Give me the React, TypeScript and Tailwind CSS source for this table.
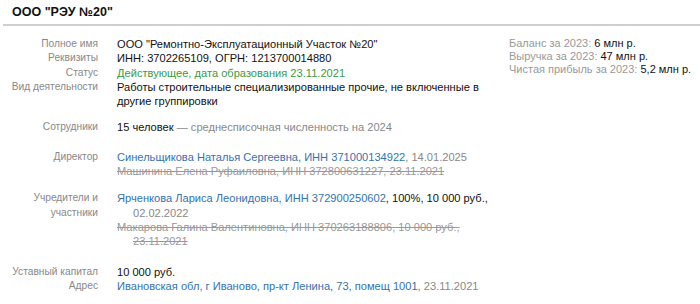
import React from 'react';

const Row: React.FC<{ label: React.ReactNode; children: React.ReactNode; className?: string }> = ({ label, children, className = '' }) => (
  <div className={`flex ${className}`}>
    <div className="w-[98px] shrink-0 text-right text-[10.2px] leading-[14.3px] text-[#888]">{label}</div>
    <div className="w-[397px] shrink-0 pl-[19px] text-[11.1px] leading-[14.3px] text-[#111]">{children}</div>
  </div>
);

const Link: React.FC<{ children: React.ReactNode }> = ({ children }) => (
  <span className="text-[#3572ad]">{children}</span>
);

const App: React.FC = () => {
  return (
    <div className="w-[700px] h-[304px] bg-white overflow-hidden" style={{ fontFamily: '"Liberation Sans", Arial, sans-serif' }}>
      <div className="pl-[12px] h-[24px] leading-[24px] text-[12.5px] font-bold text-[#111]">ООО "РЭУ №20"</div>
      <div className="ml-[3px] h-[2px] bg-[#cfcfcf]" />

      <div className="flex pt-[11px]">
        <div className="flex flex-col">
          <Row label="Полное имя">ООО "Ремонтно-Эксплуатационный Участок №20"</Row>
          <Row label="Реквизиты">ИНН: 3702265109, ОГРН: 1213700014880</Row>
          <Row label="Статус">
            <span className="text-[#3a9a45]">Действующее, дата образования 23.11.2021</span>
          </Row>
          <Row label="Вид деятельности">
            Работы строительные специализированные прочие, не включенные в другие группировки
          </Row>

          <Row label="Сотрудники" className="mt-[12px]">
            15 человек <span className="text-[#888]">— среднесписочная численность на 2024</span>
          </Row>

          <Row label="Директор" className="mt-[15px]">
            <div>
              <Link>Синельщикова Наталья Сергеевна, ИНН 371000134922</Link>
              <span className="text-[#888]">, 14.01.2025</span>
            </div>
            <div className="line-through text-[#999]">Машинина Елена Руфаиловна, ИНН 372800631227, 23.11.2021</div>
          </Row>

          <Row
            label={
              <>
                Учредители и
                <br />
                участники
              </>
            }
            className="mt-[13px]"
          >
            <div className="pl-[16px] -indent-[16px]">
              <Link>Ярченкова Лариса Леонидовна, ИНН 372900250602</Link>, 100%, 10 000 руб., <span className="text-[#888]">02.02.2022</span>
            </div>
            <div className="pl-[16px] -indent-[16px] line-through text-[#999]">
              Макарова Галина Валентиновна, ИНН 370263188806, 10 000 руб., 23.11.2021
            </div>
          </Row>

          <Row label="Уставный капитал" className="mt-[16px]">10 000 руб.</Row>
          <Row label="Адрес">
            <Link>Ивановская обл, г Иваново, пр-кт Ленина, 73, помещ 1001</Link>
            <span className="text-[#888]">, 23.11.2021</span>
          </Row>
        </div>

        <div className="pl-[14px] pt-[-1px] text-[11px] leading-[13px] text-[#999]">
          <div>
            Баланс за 2023: <span className="text-[#111]">6 млн р.</span>
          </div>
          <div>
            Выручка за 2023: <span className="text-[#111]">47 млн р.</span>
          </div>
          <div>
            Чистая прибыль за 2023: <span className="text-[#111]">5,2 млн р.</span>
          </div>
        </div>
      </div>
    </div>
  );
};

export default App;
